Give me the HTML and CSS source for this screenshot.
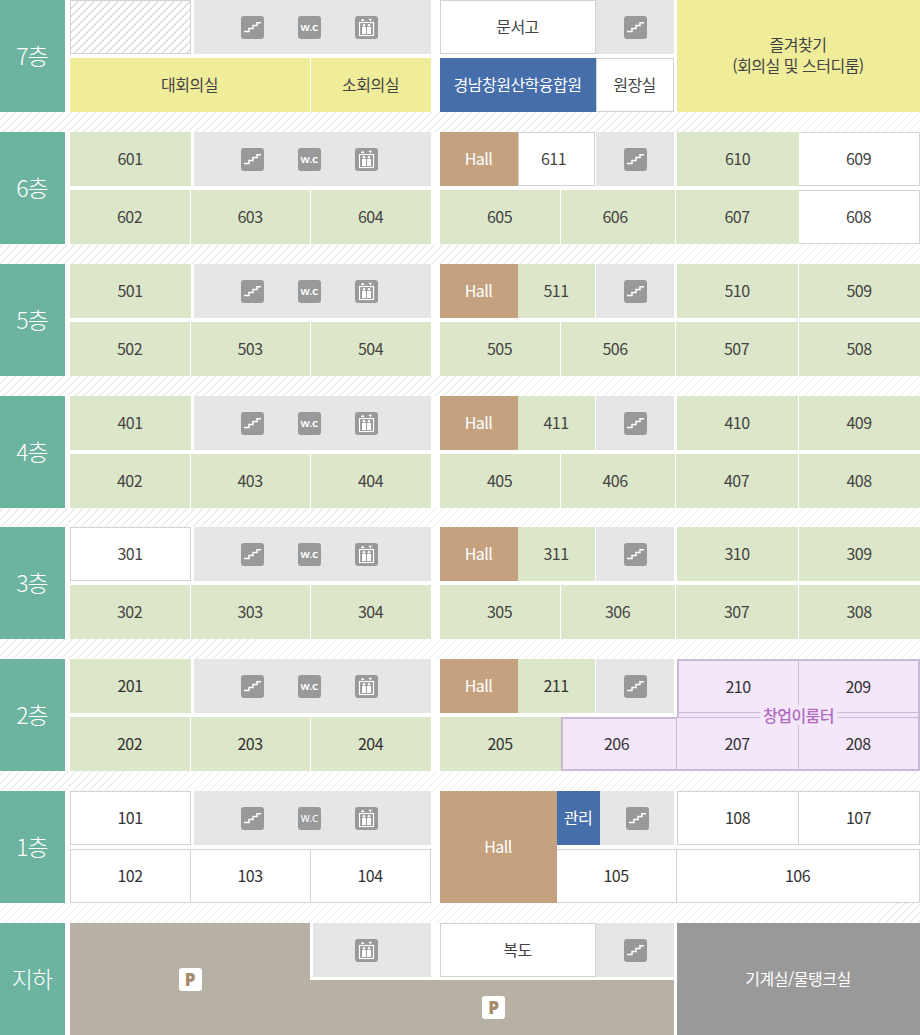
FILE: index.html
```html
<!DOCTYPE html>
<html lang="ko">
<head>
<meta charset="utf-8">
<title>층별안내</title>
<link rel="stylesheet" href="styles.css">
</head>
<body>
<svg class="defs" width="0" height="0" aria-hidden="true">
  <symbol id="stairs" viewBox="0 0 23 23"><path d="M3 15.5H8V12.5H12V9.5H16V6.8H20" fill="none" stroke="#fff" stroke-width="1.5"/></symbol>
  <symbol id="lift" viewBox="0 0 23 23">
    <rect x="4.5" y="6.5" width="14" height="13" fill="none" stroke="#fff" stroke-width="1.2"/>
    <path d="M7.7 2.6 9.6 5H5.8ZM13.4 2.8H17.2L15.3 5.2Z" fill="#fff"/>
    <circle cx="9" cy="9.3" r="1.3" fill="#fff"/><circle cx="14" cy="9.3" r="1.3" fill="#fff"/>
    <path d="M7 11H11V18H7ZM12 11H16V18H12Z" fill="#fff"/>
  </symbol>
</svg>

<section class="floor">
  <h2 class="label">7층</h2>
  <div class="west">
    <div class="wtop"><div class="c w hatch"></div>
      <div class="core"><span class="ico"><svg><use href="#stairs"/></svg></span><span class="ico wc">W.C</span><span class="ico"><svg><use href="#lift"/></svg></span></div></div>
    <div class="wbot2"><div class="c y sep">대회의실</div><div class="c y">소회의실</div></div>
  </div>
  <div class="east e7">
    <div class="e7a">
      <div class="c w">문서고</div><div class="c gray"><span class="ico"><svg><use href="#stairs"/></svg></span></div>
      <div class="c blue">경남창원산학융합원</div><div class="c w">원장실</div>
    </div>
    <div class="c y fav">즐겨찾기<br>(회의실 및 스터디룸)</div>
  </div>
</section>

<section class="floor">
  <h2 class="label">6층</h2>
  <div class="west">
    <div class="wtop"><div class="c g">601</div>
      <div class="core"><span class="ico"><svg><use href="#stairs"/></svg></span><span class="ico wc">W.C</span><span class="ico"><svg><use href="#lift"/></svg></span></div></div>
    <div class="wbot"><div class="c g sep">602</div><div class="c g sep">603</div><div class="c g">604</div></div>
  </div>
  <div class="east">
    <div class="etop"><div class="ea"><div class="c hall">Hall</div><div class="c w sep nudge">611</div><div class="c gray"><span class="ico"><svg><use href="#stairs"/></svg></span></div></div>
      <div class="eb"><div class="c g">610</div><div class="c w nl">609</div></div></div>
    <div class="ebot"><div class="c g sep">605</div><div class="c g sep nudge">606</div><div class="c g">607</div><div class="c w nl">608</div></div>
  </div>
</section>

<section class="floor">
  <h2 class="label">5층</h2>
  <div class="west">
    <div class="wtop"><div class="c g">501</div>
      <div class="core"><span class="ico"><svg><use href="#stairs"/></svg></span><span class="ico wc">W.C</span><span class="ico"><svg><use href="#lift"/></svg></span></div></div>
    <div class="wbot"><div class="c g sep">502</div><div class="c g sep">503</div><div class="c g">504</div></div>
  </div>
  <div class="east">
    <div class="etop"><div class="ea"><div class="c hall">Hall</div><div class="c g sep">511</div><div class="c gray"><span class="ico"><svg><use href="#stairs"/></svg></span></div></div>
      <div class="eb"><div class="c g sep">510</div><div class="c g">509</div></div></div>
    <div class="ebot"><div class="c g sep">505</div><div class="c g sep nudge">506</div><div class="c g sep">507</div><div class="c g">508</div></div>
  </div>
</section>

<section class="floor f4">
  <h2 class="label">4층</h2>
  <div class="west">
    <div class="wtop"><div class="c g">401</div>
      <div class="core"><span class="ico"><svg><use href="#stairs"/></svg></span><span class="ico wc">W.C</span><span class="ico"><svg><use href="#lift"/></svg></span></div></div>
    <div class="wbot"><div class="c g sep">402</div><div class="c g sep">403</div><div class="c g">404</div></div>
  </div>
  <div class="east">
    <div class="etop"><div class="ea"><div class="c hall">Hall</div><div class="c g sep">411</div><div class="c gray"><span class="ico"><svg><use href="#stairs"/></svg></span></div></div>
      <div class="eb"><div class="c g sep">410</div><div class="c g">409</div></div></div>
    <div class="ebot"><div class="c g sep">405</div><div class="c g sep nudge">406</div><div class="c g sep">407</div><div class="c g">408</div></div>
  </div>
</section>

<section class="floor">
  <h2 class="label">3층</h2>
  <div class="west">
    <div class="wtop"><div class="c w">301</div>
      <div class="core"><span class="ico"><svg><use href="#stairs"/></svg></span><span class="ico wc">W.C</span><span class="ico"><svg><use href="#lift"/></svg></span></div></div>
    <div class="wbot"><div class="c g sep">302</div><div class="c g sep">303</div><div class="c g">304</div></div>
  </div>
  <div class="east">
    <div class="etop"><div class="ea"><div class="c hall">Hall</div><div class="c g sep">311</div><div class="c gray"><span class="ico"><svg><use href="#stairs"/></svg></span></div></div>
      <div class="eb"><div class="c g sep">310</div><div class="c g">309</div></div></div>
    <div class="ebot"><div class="c g sep">305</div><div class="c g sep">306</div><div class="c g sep">307</div><div class="c g">308</div></div>
  </div>
</section>

<section class="floor dark">
  <h2 class="label">2층</h2>
  <div class="west">
    <div class="wtop"><div class="c g">201</div>
      <div class="core"><span class="ico"><svg><use href="#stairs"/></svg></span><span class="ico wc">W.C</span><span class="ico"><svg><use href="#lift"/></svg></span></div></div>
    <div class="wbot"><div class="c g sep">202</div><div class="c g sep">203</div><div class="c g">204</div></div>
  </div>
  <div class="east">
    <div class="etop"><div class="ea"><div class="c hall">Hall</div><div class="c g sep">211</div><div class="c gray"><span class="ico"><svg><use href="#stairs"/></svg></span></div></div>
      <div class="ptop">
        <div class="prooms"><div class="c pline">210</div><div class="c">209</div></div>
        <span class="plabel">창업이룸터</span>
      </div></div>
    <div class="ebot2"><div class="c g">205</div>
      <div class="pbot"><div class="c pline pfirst nudge">206</div><div class="c pline ptopline">207</div><div class="c ptopline">208</div></div></div>
  </div>
</section>

<section class="floor dark">
  <h2 class="label">1층</h2>
  <div class="west">
    <div class="wtop"><div class="c w">101</div>
      <div class="core"><span class="ico"><svg><use href="#stairs"/></svg></span><span class="ico wc thin">W.C</span><span class="ico"><svg><use href="#lift"/></svg></span></div></div>
    <div class="wbot"><div class="c w">102</div><div class="c w nl">103</div><div class="c w nl">104</div></div>
  </div>
  <div class="east e1">
    <div class="c hall">Hall</div>
    <div class="e1r">
      <div class="e1top"><div class="c blue">관리</div><div class="c gray"><span class="ico"><svg><use href="#stairs"/></svg></span></div>
        <div class="eb"><div class="c w">108</div><div class="c w nl">107</div></div></div>
      <div class="e1bot"><div class="c w nl">105</div><div class="c w nl">106</div></div>
    </div>
  </div>
</section>

<section class="floor last">
  <h2 class="label">지하</h2>
  <div class="base">
    <div class="lot">
      <div class="c park big"><span class="ico pk">P</span></div>
      <div class="notch">
        <div class="core basecore"><span class="ico"><svg><use href="#lift"/></svg></span></div>
        <div class="hallway"><div class="c w">복도</div><div class="c gray"><span class="ico"><svg><use href="#stairs"/></svg></span></div></div>
      </div>
      <div class="c park inset"><span class="ico pk">P</span></div>
    </div>
    <div class="c mech">기계실/물탱크실</div>
  </div>
</section>
</body>
</html>
```
FILE: styles.css
```css
* { box-sizing: border-box; }
html, body { margin: 0; padding: 0; }
body {
  width: 920px;
  height: 1035px;
  overflow: hidden;
  font-family: "Noto Sans CJK KR", "Noto Sans", sans-serif;
  font-size: 16px;
  letter-spacing: -0.5px;
  color: #444;
  background: repeating-linear-gradient(135deg, #fff 0 4.6px, #ececec 4.6px 5.66px);
}
.defs { position: absolute; }

.floor { display: flex; height: 112px; margin-bottom: 20px; background: #fff; }
.f4 { margin-bottom: 19px; }
.last { margin-bottom: 0; }
.dark { color: #333; }

.label {
  width: 65px;
  margin: 0 5px 0 0;
  padding: 0 1px 2px 0;
  display: flex;
  align-items: center;
  justify-content: center;
  background: #6cb3a0;
  color: #fff;
  font-size: 23px;
  font-weight: 300;
  letter-spacing: -1px;
}

.west { width: 361px; margin-right: 9px; display: grid; grid-template-rows: 54px 54px; row-gap: 4px; }
.east { width: 480px; display: grid; grid-template-rows: 54px 54px; row-gap: 4px; }

.c { display: flex; align-items: center; justify-content: center; text-align: center; min-width: 0; padding: 0 1px 2px 0; }
.g { background: #dce6c8; }
.y { background: #f0ed9a; }
.w { background: #fff; border: 1px solid #d2d2d2; }
.nl { border-left: 0; }
.sep { margin-right: 1px; }
.nudge { padding-right: 6px; }
.gray { background: #e6e6e6; padding: 0; }
.hall { background: #c4a27f; color: #fff; }
.blue { background: #456eab; color: #fff; }
.hatch { background: repeating-linear-gradient(135deg, #fff 0 4.6px, #dcdcdc 4.6px 5.66px); }

.wtop { display: grid; grid-template-columns: 121px 237px; column-gap: 3px; }
.wbot { display: grid; grid-template-columns: 121px 120px 120px; }
.wbot2 { display: grid; grid-template-columns: 241px 120px; }

.core { display: flex; align-items: center; gap: 34px; padding-left: 47px; background: #e6e6e6; }
.basecore { padding-left: 42px; }

.ico {
  display: flex;
  flex: none;
  width: 23px;
  height: 23px;
  align-items: center;
  justify-content: center;
  border-radius: 3px;
  background: #999;
  margin-top: 1px;
}
.ico svg { display: block; width: 23px; height: 23px; }
.wc { color: #fff; font-family: "Noto Sans", sans-serif; font-size: 9.5px; font-weight: 700; letter-spacing: 0.3px; }
.wc.thin { font-weight: 500; }
.pk { background: #fff; color: #a58b6b; font-family: "Noto Sans", sans-serif; font-size: 17px; font-weight: 900; letter-spacing: 0; margin: 0; }

.etop { display: flex; gap: 3px; }
.ea { width: 234px; display: grid; grid-template-columns: 78px 78px 78px; }
.eb { width: 243px; display: grid; grid-template-columns: 122px 121px; }
.ebot { display: grid; grid-template-columns: 121px 115px 123px 121px; }

.e7 { display: grid; grid-template-rows: none; grid-template-columns: 234px 243px; column-gap: 3px; }
.e7a { display: grid; grid-template-columns: 156px 78px; grid-template-rows: 54px 54px; row-gap: 4px; }
.fav { line-height: 21px; }

.ptop {
  position: relative;
  width: 243px;
  height: 58px;
  border: 2px solid #c9bad6;
  border-bottom: 0;
  background: #f4e7f9;
}
.prooms { height: 52px; display: grid; grid-template-columns: 120px 119px; border-bottom: 1px solid #c9bad6; }
.pline { border-right: 1px solid #c9bad6; }
.plabel {
  position: absolute;
  left: 50%;
  bottom: -8px;
  z-index: 1;
  transform: translateX(-50%);
  padding: 0 3px;
  background: #f4e7f9;
  color: #b06cc0;
  font-weight: 500;
  line-height: 20px;
  white-space: nowrap;
}
.ebot2 { display: grid; grid-template-columns: 121px 359px; }
.pbot {
  display: grid;
  grid-template-columns: 114px 122px 119px;
  border: 2px solid #c9bad6;
  border-top: 0;
  background: #f4e7f9;
}
.pfirst { border-top: 2px solid #c9bad6; }
.ptopline { border-top: 1px solid #c9bad6; }

.e1 { display: grid; grid-template-rows: none; grid-template-columns: 117px 363px; }
.e1r { display: grid; grid-template-rows: 54px 54px; row-gap: 4px; }
.e1top { display: grid; grid-template-columns: 43px 74px 243px; column-gap: 0; }
.e1top .eb { margin-left: 3px; }
.e1bot { display: grid; grid-template-columns: 120px 243px; }

.base { display: grid; grid-template-columns: 604px 243px; column-gap: 3px; width: 850px; }
.lot { display: grid; grid-template-columns: 240px 364px; grid-template-rows: 57px 55px; }
.park { background: #b7b0a4; padding: 0; }
.big { grid-row: 1 / 3; }
.inset { padding-left: 3px; }
.notch { display: flex; padding: 0 0 3px 3px; background: #fff; }
.notch .core { width: 118px; margin-right: 9px; }
.hallway { width: 234px; display: grid; grid-template-columns: 156px 78px; }
.mech { background: #999; color: #fff; }
```
